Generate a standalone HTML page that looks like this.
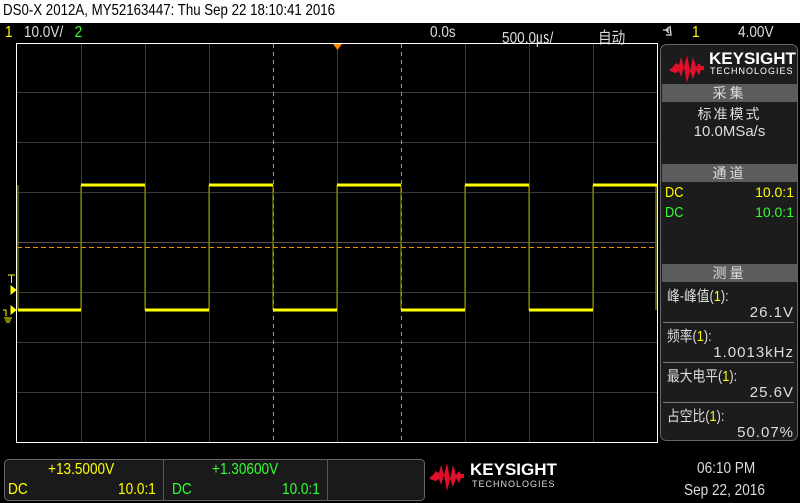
<!DOCTYPE html><html><head><style>
body{margin:0;width:800px;height:503px;background:#000;position:relative;overflow:hidden;font-family:"Liberation Sans","Noto Sans CJK SC",sans-serif;}
.a{position:absolute;white-space:nowrap}
.t{font-size:15px;color:#ddd;transform:scaleX(.85);transform-origin:left top}
.r{position:absolute;white-space:nowrap;font-size:15px;color:#ddd;text-align:right;right:6px;letter-spacing:1px}
.hd{position:absolute;left:662px;width:135px;height:18px;background:#5a5c5e;color:#ddd;font-size:14px;text-align:center;line-height:18px;letter-spacing:3px}
.y{color:#ff0}.g{color:#3f3}
</style></head><body>
<div class="a" style="left:0;top:0;width:800px;height:23px;background:#fff"></div>
<div class="a" style="left:3px;top:2px;font-size:16px;color:#000;transform:scaleX(.83);transform-origin:left top">DS0-X 2012A, MY52163447: Thu Sep 22 18:10:41 2016</div>
<div class="a t" style="left:5px;top:24px;font-size:16px"><span class="y">1</span>&nbsp;&nbsp;&nbsp;10.0V/&nbsp;&nbsp;&nbsp;<span class="g">2</span></div>
<div class="a t" style="left:430px;top:24px;font-size:16px">0.0s</div>
<div class="a t" style="left:502px;top:24px;font-size:16px">500.0㎲/</div>
<div class="a t" style="left:598px;top:24px;font-size:16px">自动</div>
<div class="a t" style="left:692px;top:24px;font-size:16px"><span class="y">1</span></div>
<div class="a t" style="left:738px;top:24px;font-size:16px">4.00V</div>
<svg class="a" style="left:0;top:0" width="800" height="503">
<path d="M666 35h5l-1-9M663 30h6M669 27l-3 3 3 3" stroke="#ddd" fill="none" stroke-width="1.3"/>
<rect x="16.5" y="43.5" width="641" height="399" fill="none" stroke="#fff"/>
<g stroke="#3a3a3a">
<path d="M81.5 44V442M145.5 44V442M209.5 44V442M337.5 44V442M465.5 44V442M529.5 44V442M593.5 44V442"/>
<path d="M17 92.5H657M17 142.5H657M17 192.5H657M17 292.5H657M17 342.5H657M17 392.5H657"/>
<path d="M17 242.5H657" stroke="#555"/>
</g>
<path d="M273.5 44V442M401.5 44V442" stroke="#f80" stroke-dasharray="4,4"/>
<path d="M17 247.5H657" stroke="#f80" stroke-dasharray="5,3"/>
<path d="M333 44h9l-4.5 6z" fill="#f80"/>
<path d="M18 185V310M81 185V310M145 185V310M209 185V310M273 185V310M337 185V310M401 185V310M465 185V310M529 185V310M593 185V310M656 185V310" stroke="#8a8a00" stroke-width="1.2"/>
<path d="M18 310H81M145 310H209M273 310H337M401 310H465M529 310H593M81 185H145M209 185H273M337 185H401M465 185H529M593 185H657" stroke="#ff0" stroke-width="3"/>
<path d="M8 275h7M11.5 275v8M11 286v8l5-4zM11 306v8l5-4z" stroke="#ff0" fill="#ff0"/>
<path d="M3 310h3v6M4 318h8M5 320h6M6 322h4" stroke="#ff0" fill="none"/>
<rect x="660.5" y="44.5" width="137" height="396" rx="6" fill="#1c1c1c" stroke="#666"/>
<path d="M669 70l4-3 3-4 3 2 2-8 3 10 3-12 3 16 3-14 3 10 3-4 2 3h3v4h-3l-2 5-3-5-3 9-3-8-3 12-3-16-3 10-2-6-3 2-4-1z" fill="#e0102a"/>
<path d="M663 322.5H794M663 362.5H794M663 402.5H794" stroke="#777"/>
<rect x="4.5" y="459.5" width="420" height="41" rx="4" fill="#1a1a1a" stroke="#666"/>
<path d="M163.5 460V500M327.5 460V500" stroke="#555"/>
<path d="M429 478l4-3 3-4 3 2 2-8 3 10 3-12 3 16 3-14 3 10 3-4 2 3h3v4h-3l-2 5-3-5-3 9-3-8-3 12-3-16-3 10-2-6-3 2-4-1z" fill="#e0102a"/>
</svg>
<div class="a" style="left:709px;top:49px;color:#fff;font-weight:bold;font-size:17px">KEYSIGHT</div>
<div class="a" style="left:710px;top:66px;color:#fff;font-size:9px;letter-spacing:1px">TECHNOLOGIES</div>
<div class="hd" style="top:84px">采集</div>
<div class="a" style="left:662px;width:135px;top:104px;text-align:center;color:#ddd;font-size:14px;letter-spacing:2px">标准模式</div>
<div class="a" style="left:662px;width:135px;top:123px;text-align:center;color:#ddd;font-size:15px">10.0MSa/s</div>
<div class="hd" style="top:164px">通道</div>
<div class="a t y" style="left:665px;top:184px">DC</div><div class="r y" style="top:184px;letter-spacing:0;font-size:14px">10.0:1</div>
<div class="a t g" style="left:665px;top:204px">DC</div><div class="r g" style="top:204px;letter-spacing:0;font-size:14px">10.0:1</div>
<div class="hd" style="top:264px">测量</div>
<div class="a t" style="left:667px;top:285px">峰-峰值(<span class="y">1</span>):</div>
<div class="r" style="top:304px">26.1V</div>
<div class="a t" style="left:667px;top:325px">频率(<span class="y">1</span>):</div>
<div class="r" style="top:344px">1.0013kHz</div>
<div class="a t" style="left:667px;top:365px">最大电平(<span class="y">1</span>):</div>
<div class="r" style="top:384px">25.6V</div>
<div class="a t" style="left:667px;top:405px">占空比(<span class="y">1</span>):</div>
<div class="r" style="top:424px">50.07%</div>
<div class="a t y" style="left:48px;top:461px;font-size:16px">+13.5000V</div>
<div class="a t y" style="left:8px;top:481px;font-size:16px">DC</div><div class="a t y" style="left:118px;top:481px;font-size:16px">10.0:1</div>
<div class="a t g" style="left:212px;top:461px;font-size:16px">+1.30600V</div>
<div class="a t g" style="left:172px;top:481px;font-size:16px">DC</div><div class="a t g" style="left:282px;top:481px;font-size:16px">10.0:1</div>
<div class="a" style="left:470px;top:460px;color:#fff;font-weight:bold;font-size:17px">KEYSIGHT</div>
<div class="a" style="left:472px;top:479px;color:#ddd;font-size:9px;letter-spacing:1px">TECHNOLOGIES</div>
<div class="a t" style="left:697px;top:460px;font-size:16px">06:10 PM</div>
<div class="a t" style="left:684px;top:482px;font-size:16px">Sep 22, 2016</div>
</body></html>
